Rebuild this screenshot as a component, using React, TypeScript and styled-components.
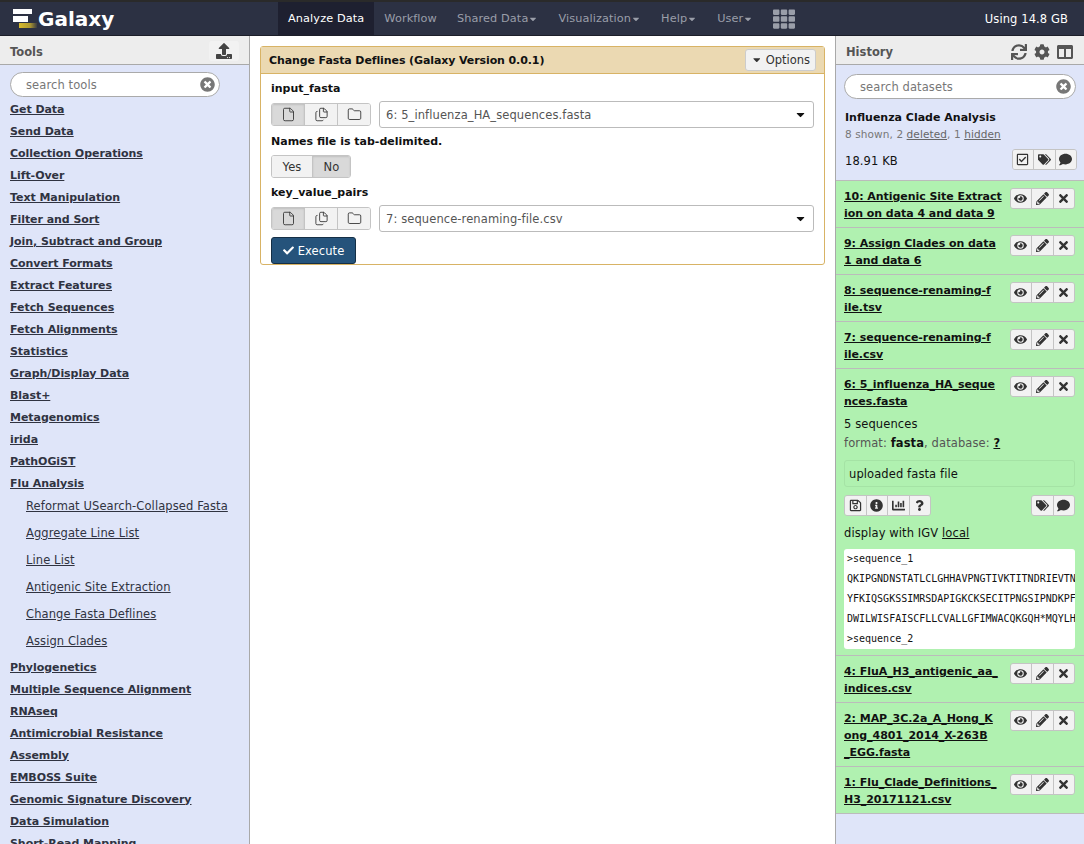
import * as React from "react";
import styled, { createGlobalStyle } from "styled-components";
import { File, Files, Folder } from "lucide-react";
import {
  FaCaretDown,
  FaChartBar,
  FaCheck,
  FaCog,
  FaColumns,
  FaComment,
  FaEye,
  FaInfoCircle,
  FaPencilAlt,
  FaQuestion,
  FaRegCheckSquare,
  FaRegSave,
  FaSync,
  FaTags,
  FaTh,
  FaTimes,
  FaTimesCircle,
  FaUpload,
} from "react-icons/fa";

const font = `"DejaVu Sans", "Open Sans", sans-serif`;

const tools = [
  "Get Data", "Send Data", "Collection Operations", "Lift-Over", "Text Manipulation",
  "Filter and Sort", "Join, Subtract and Group", "Convert Formats", "Extract Features",
  "Fetch Sequences", "Fetch Alignments", "Statistics", "Graph/Display Data", "Blast+",
  "Metagenomics", "irida", "PathOGiST", "Flu Analysis",
];
const fluTools = [
  "Reformat USearch-Collapsed Fasta", "Aggregate Line List", "Line List",
  "Antigenic Site Extraction", "Change Fasta Deflines", "Assign Clades",
];
const moreTools = [
  "Phylogenetics", "Multiple Sequence Alignment", "RNAseq", "Antimicrobial Resistance",
  "Assembly", "EMBOSS Suite", "Genomic Signature Discovery", "Data Simulation", "Short-Read Mapping",
];
const peek = [
  ">sequence_1",
  "QKIPGNDNSTATLCLGHHAVPNGTIVKTITNDRIEVTN",
  "YFKIQSGKSSIMRSDAPIGKCKSECITPNGSIPNDKPF",
  "DWILWISFAISCFLLCVALLGFIMWACQKGQH*MQYLH",
  ">sequence_2",
];

const GlobalStyle = createGlobalStyle`
  html, body {
    margin: 0;
    height: 100%;
    overflow: hidden;
    background: #fff;
    font-family: ${font};
    font-size: 11.5px;
    letter-spacing: 0.1px;
    color: #111;
  }
`;

const Page = styled.div`
  display: flex;
  flex-direction: column;
  width: 1084px;
  height: 844px;
  overflow: hidden;
`;

const Masthead = styled.header`
  display: flex;
  align-items: stretch;
  flex: none;
  height: 36px;
  box-sizing: border-box;
  background: #2c3143;
  border-top: 2px solid #2a2a2a;
  border-bottom: 1px solid #1c1e29;
`;

const Brand = styled.div`
  display: flex;
  align-items: center;
  width: 278px;
  padding: 1px 0 0 12px;
  box-sizing: border-box;
  color: #fff;
  font-size: 20px;
  font-weight: 700;
  letter-spacing: 0;
`;

const Nav = styled.nav`
  display: flex;
  align-items: stretch;
  flex: 1;
`;

const NavItem = styled.div<{ $active?: boolean }>`
  display: flex;
  align-items: center;
  padding: 0 10px;
  font-size: 11.3px;
  color: ${(p) => (p.$active ? "#fff" : "#9a9ea9")};
  background: ${(p) => (p.$active ? "#1e2030" : "transparent")};
  svg {
    font-size: 10px;
  }
`;

const AppsIcon = styled(FaTh)`
  font-size: 22px !important;
`;

const Quota = styled.div`
  display: flex;
  align-items: center;
  padding-right: 16px;
  color: #fff;
`;

const Body = styled.div`
  display: flex;
  flex: 1;
  min-height: 0;
`;

const Side = styled.aside<{ $w: number; $left?: boolean }>`
  display: flex;
  flex-direction: column;
  flex: none;
  width: ${(p) => p.$w}px;
  box-sizing: border-box;
  background: #dfe5f9;
  overflow: hidden;
  border-${(p) => (p.$left ? "right" : "left")}: 1px solid #a9a9a9;
`;

const PanelHeader = styled.div`
  display: flex;
  align-items: center;
  justify-content: space-between;
  flex: none;
  height: 29px;
  box-sizing: border-box;
  padding: 4px 10px 0;
  background: #ededed;
  border-bottom: 1px solid #a9a9a9;
  color: #555;
  font-weight: 700;
  font-size: 11.5px;
  letter-spacing: 0;
`;

const UploadButton = styled.div`
  display: flex;
  align-items: center;
  justify-content: center;
  width: 30px;
  height: 20px;
  margin-top: -3px;
  background: #f2f2f2;
  border-radius: 3px;
  color: #444;
  font-size: 16px;
`;

const HeaderIcons = styled.div`
  display: flex;
  align-items: center;
  gap: 7px;
  margin: -1px 1px 0 0;
  color: #555;
  font-size: 16px;
`;

const SearchBox = styled.div<{ $ml: number; $mr: number; $mt: number }>`
  display: flex;
  align-items: center;
  justify-content: space-between;
  flex: none;
  height: 25px;
  box-sizing: border-box;
  margin: ${(p) => p.$mt}px ${(p) => p.$mr}px 0 ${(p) => p.$ml}px;
  padding: 0 4px 0 15px;
  background: #fff;
  border: 1px solid #aaa;
  border-radius: 13px;
  color: #777;
  svg {
    font-size: 15px;
    color: #777;
  }
`;

const ToolList = styled.div`
  display: flex;
  flex-direction: column;
  padding: 1px 0 0 10px;
`;

const ToolSection = styled.a`
  display: flex;
  align-items: center;
  height: 22px;
  color: #303341;
  font-weight: 700;
  font-size: 11px;
  letter-spacing: -0.05px;
  text-decoration: underline;
  white-space: nowrap;
`;

const SubTools = styled.div`
  display: flex;
  flex-direction: column;
  margin: -2px 0 2px;
`;

const ToolLink = styled.a`
  display: flex;
  align-items: center;
  height: 27px;
  padding-left: 16px;
  color: #303341;
  text-decoration: underline;
  white-space: nowrap;
`;

const Center = styled.main`
  flex: 1;
  min-width: 0;
  padding: 10px;
`;

const Card = styled.section`
  border: 1px solid #d8b365;
  border-radius: 3px;
`;

const CardHeader = styled.div`
  display: flex;
  align-items: center;
  justify-content: space-between;
  height: 26px;
  padding: 0 8px;
  background: #ebd9b2;
  border-bottom: 1px solid #d8b365;
  font-weight: 700;
  font-size: 11px;
  letter-spacing: -0.1px;
  color: #111;
`;

const OptionsButton = styled.div`
  display: flex;
  align-items: center;
  gap: 3px;
  height: 22px;
  box-sizing: border-box;
  padding: 0 5px;
  background: #f2f2f2;
  border: 1px solid #ccc;
  border-radius: 3px;
  font-size: 11.5px;
  font-weight: 400;
  letter-spacing: 0;
  color: #333;
`;

const CardBody = styled.div`
  display: flex;
  flex-direction: column;
  padding: 6px 10px 0;
`;

const FieldLabel = styled.div`
  display: flex;
  align-items: center;
  height: 16px;
  font-weight: 700;
  font-size: 11px;
  letter-spacing: 0;
  color: #111;
`;

const FieldRow = styled.div`
  display: flex;
  align-items: center;
  gap: 8px;
  height: 27px;
  margin: 5px 0;
`;

const ToggleRow = styled.div`
  display: flex;
  height: 23px;
  margin: 6px 0;
`;

const ButtonGroup = styled.div`
  display: flex;
  flex: none;
  align-self: flex-start;
  border: 1px solid #c4c4c4;
  border-radius: 3px;
  overflow: hidden;
`;

const FileButtons = styled(ButtonGroup)`
  align-self: center;
`;

const GroupButton = styled.div<{ $active?: boolean; $w: number; $h?: number }>`
  display: flex;
  align-items: center;
  justify-content: center;
  width: ${(p) => p.$w}px;
  height: ${(p) => p.$h ?? 19}px;
  background: ${(p) => (p.$active ? "#d9d9d9" : "#f2f2f2")};
  box-shadow: ${(p) => (p.$active ? "inset 0 1px 2px rgba(0,0,0,0.12)" : "none")};
  color: #333;
  svg {
    font-size: 13px;
  }
  & + & {
    border-left: 1px solid #c4c4c4;
  }
`;

const QuestionIcon = styled(FaQuestion)`
  font-size: 11px !important;
`;

const Select = styled.div`
  display: flex;
  align-items: center;
  justify-content: space-between;
  flex: 1;
  height: 27px;
  box-sizing: border-box;
  padding: 0 6px;
  background: #fff;
  border: 1px solid #bbb;
  border-radius: 3px;
  color: #555;
  svg {
    color: #111;
    font-size: 13px;
  }
`;

const ExecuteButton = styled.div`
  display: flex;
  align-items: center;
  justify-content: center;
  gap: 4px;
  width: 85px;
  height: 27px;
  box-sizing: border-box;
  background: #25537b;
  border: 1px solid #152f46;
  border-radius: 3px;
  color: #fff;
  svg {
    font-size: 11px;
  }
`;

const HistoryInfo = styled.div`
  display: flex;
  flex-direction: column;
  flex: none;
  padding: 0 7px 0 9px;
  height: 81px;
  box-sizing: border-box;
`;

const HistoryName = styled.div`
  margin-top: 10px;
  height: 17px;
  line-height: 17px;
  font-weight: 700;
  font-size: 11px;
  letter-spacing: 0;
  color: #111;
`;

const HistoryMeta = styled.div`
  height: 16px;
  line-height: 16px;
  font-size: 10.5px;
  color: #777;
  u {
    color: #666;
  }
`;

const SizeRow = styled.div`
  display: flex;
  align-items: center;
  justify-content: space-between;
  margin-top: 7px;
  height: 24px;
  color: #111;
`;

const Datasets = styled.div`
  display: flex;
  flex-direction: column;
  border-top: 1px solid #bbb;
`;

const Dataset = styled.article<{ $open?: boolean }>`
  padding: 7px 9px ${(p) => (p.$open ? 6 : 5)}px 8px;
  background: #b0f1b0;
  border-bottom: 1px solid #bbb;
`;

const DatasetHead = styled.div`
  display: flex;
  align-items: flex-start;
  justify-content: space-between;
`;

const DatasetTitle = styled.div`
  font-weight: 700;
  font-size: 11px;
  letter-spacing: -0.05px;
  line-height: 17px;
  text-decoration: underline;
  white-space: pre;
  color: #111;
`;

const Summary = styled.div`
  margin-top: 5px;
  height: 19px;
  line-height: 19px;
  color: #111;
`;

const FormatLine = styled.div`
  height: 19px;
  line-height: 19px;
  color: #555;
  b {
    color: #111;
  }
  u {
    font-weight: 700;
    color: #111;
  }
`;

const InfoBox = styled.div`
  display: flex;
  align-items: center;
  height: 27px;
  margin-top: 7px;
  padding: 0 4px;
  box-sizing: border-box;
  border: 1px solid #a5e3a5;
  border-radius: 3px;
  color: #111;
`;

const ActionsRow = styled.div`
  display: flex;
  justify-content: space-between;
  margin-top: 8px;
`;

const DisplayLine = styled.div`
  height: 17px;
  line-height: 17px;
  margin-top: 9px;
  color: #111;
`;

const Peek = styled.pre`
  width: 231px;
  height: 100px;
  box-sizing: border-box;
  margin: 7px 0 0;
  padding: 0 3px;
  overflow: hidden;
  background: #fff;
  border-radius: 3px;
  font-family: "DejaVu Sans Mono", monospace;
  font-size: 10px;
  letter-spacing: 0;
  line-height: 20px;
  color: #111;
`;

const Logo = () => (
  <svg width="26" height="22" viewBox="0 0 26 22">
    <defs>
      <linearGradient id="logoGold" x1="0" x2="1" y1="0" y2="0">
        <stop offset="0" stopColor="#d8bb2e" />
        <stop offset="0.6" stopColor="#b09a30" />
        <stop offset="1" stopColor="#3a3c42" />
      </linearGradient>
    </defs>
    <rect x="1" y="1" width="19" height="5" fill="#fff" />
    <rect x="1" y="8" width="15" height="6" fill="#fff" />
    <rect x="7" y="15" width="18" height="5" fill="url(#logoGold)" />
  </svg>
);

const DatasetButtons = () => (
  <ButtonGroup>
    <GroupButton $w={20.5}><FaEye /></GroupButton>
    <GroupButton $w={20.5}><FaPencilAlt /></GroupButton>
    <GroupButton $w={20.5}><FaTimes /></GroupButton>
  </ButtonGroup>
);

const Collapsed = ({ lines }: { lines: string[] }) => (
  <Dataset>
    <DatasetHead>
      <DatasetTitle>
        {lines.map((l) => (
          <div key={l}>{l}</div>
        ))}
      </DatasetTitle>
      <DatasetButtons />
    </DatasetHead>
  </Dataset>
);

const FileField = ({ value }: { value: string }) => (
  <FieldRow>
    <FileButtons>
      <GroupButton $w={32} $h={21} $active><File size={15} strokeWidth={1.4} /></GroupButton>
      <GroupButton $w={32} $h={21}><Files size={15} strokeWidth={1.4} /></GroupButton>
      <GroupButton $w={32} $h={21}><Folder size={15} strokeWidth={1.4} /></GroupButton>
    </FileButtons>
    <Select>
      {value}
      <FaCaretDown />
    </Select>
  </FieldRow>
);

const App: React.FC = () => {
  return (
    <Page>
      <GlobalStyle />
      <Masthead>
        <Brand>
          <Logo />
          Galaxy
        </Brand>
        <Nav>
          <NavItem $active>Analyze Data</NavItem>
          <NavItem>Workflow</NavItem>
          <NavItem>Shared Data<FaCaretDown /></NavItem>
          <NavItem>Visualization<FaCaretDown /></NavItem>
          <NavItem>Help<FaCaretDown /></NavItem>
          <NavItem>User<FaCaretDown /></NavItem>
          <NavItem><AppsIcon /></NavItem>
        </Nav>
        <Quota>Using 14.8 GB</Quota>
      </Masthead>
      <Body>
        <Side $w={250} $left>
          <PanelHeader>
            Tools
            <UploadButton><FaUpload /></UploadButton>
          </PanelHeader>
          <SearchBox $ml={10} $mr={29} $mt={7}>
            search tools
            <FaTimesCircle />
          </SearchBox>
          <ToolList>
            {tools.map((t) => <ToolSection key={t}>{t}</ToolSection>)}
            <SubTools>
              {fluTools.map((t) => <ToolLink key={t}>{t}</ToolLink>)}
            </SubTools>
            {moreTools.map((t) => <ToolSection key={t}>{t}</ToolSection>)}
          </ToolList>
        </Side>
        <Center>
          <Card>
            <CardHeader>
              Change Fasta Deflines (Galaxy Version 0.0.1)
              <OptionsButton><FaCaretDown />Options</OptionsButton>
            </CardHeader>
            <CardBody>
              <FieldLabel>input_fasta</FieldLabel>
              <FileField value="6: 5_influenza_HA_sequences.fasta" />
              <FieldLabel>Names file is tab-delimited.</FieldLabel>
              <ToggleRow>
                <ButtonGroup>
                  <GroupButton $w={40} $h={21}>Yes</GroupButton>
                  <GroupButton $w={37} $h={21} $active>No</GroupButton>
                </ButtonGroup>
              </ToggleRow>
              <FieldLabel>key_value_pairs</FieldLabel>
              <FileField value="7: sequence-renaming-file.csv" />
              <ExecuteButton><FaCheck />Execute</ExecuteButton>
            </CardBody>
          </Card>
        </Center>
        <Side $w={249}>
          <PanelHeader>
            History
            <HeaderIcons><FaSync /><FaCog /><FaColumns /></HeaderIcons>
          </PanelHeader>
          <SearchBox $ml={8} $mr={8} $mt={9}>
            search datasets
            <FaTimesCircle />
          </SearchBox>
          <HistoryInfo>
            <HistoryName>Influenza Clade Analysis</HistoryName>
            <HistoryMeta>8 shown, 2 <u>deleted</u>, 1 <u>hidden</u></HistoryMeta>
            <SizeRow>
              18.91 KB
              <ButtonGroup>
                <GroupButton $w={20.5}><FaRegCheckSquare /></GroupButton>
                <GroupButton $w={20.5}><FaTags /></GroupButton>
                <GroupButton $w={20.5}><FaComment /></GroupButton>
              </ButtonGroup>
            </SizeRow>
          </HistoryInfo>
          <Datasets>
            <Collapsed lines={["10: Antigenic Site Extract", "ion on data 4 and data 9"]} />
            <Collapsed lines={["9: Assign Clades on data", "1 and data 6"]} />
            <Collapsed lines={["8: sequence-renaming-f", "ile.tsv"]} />
            <Collapsed lines={["7: sequence-renaming-f", "ile.csv"]} />
            <Dataset $open>
              <DatasetHead>
                <DatasetTitle>
                  <div>6: 5_influenza_HA_seque</div>
                  <div>nces.fasta</div>
                </DatasetTitle>
                <DatasetButtons />
              </DatasetHead>
              <Summary>5 sequences</Summary>
              <FormatLine>format: <b>fasta</b>, database: <u>?</u></FormatLine>
              <InfoBox>uploaded fasta file</InfoBox>
              <ActionsRow>
                <ButtonGroup>
                  <GroupButton $w={20.5}><FaRegSave /></GroupButton>
                  <GroupButton $w={20.5}><FaInfoCircle /></GroupButton>
                  <GroupButton $w={20.5}><FaChartBar /></GroupButton>
                  <GroupButton $w={20.5}><QuestionIcon /></GroupButton>
                </ButtonGroup>
                <ButtonGroup>
                  <GroupButton $w={20.5}><FaTags /></GroupButton>
                  <GroupButton $w={20.5}><FaComment /></GroupButton>
                </ButtonGroup>
              </ActionsRow>
              <DisplayLine>display with IGV <u>local</u></DisplayLine>
              <Peek>{peek.join("\n")}</Peek>
            </Dataset>
            <Collapsed lines={["4: FluA_H3_antigenic_aa_", "indices.csv"]} />
            <Collapsed lines={["2: MAP_3C.2a_A_Hong_K", "ong_4801_2014_X-263B", "_EGG.fasta"]} />
            <Collapsed lines={["1: Flu_Clade_Definitions_", "H3_20171121.csv"]} />
          </Datasets>
        </Side>
      </Body>
    </Page>
  );
};

export default App;
